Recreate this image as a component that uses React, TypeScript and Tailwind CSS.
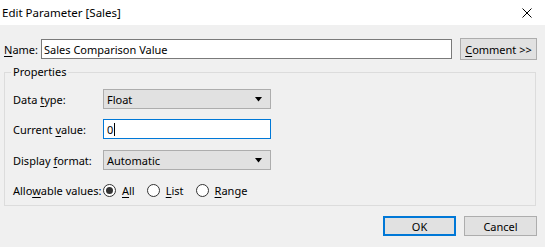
function Key({ children }: { children: string }) {
  return <span className="underline underline-offset-[2px] decoration-[1px]">{children}</span>
}

function Caret() {
  return (
    <svg width="7" height="5" viewBox="0 0 7 5" aria-hidden className="shrink-0">
      <path d="M0 0h7L3.5 4.5z" fill="#000" />
    </svg>
  )
}

function Select({ value }: { value: string }) {
  return (
    <div className="flex h-[20px] w-[168px] items-center justify-between border border-[#adadad] bg-[#e1e1e1] pl-[3px] pr-[8px]">
      <span>{value}</span>
      <Caret />
    </div>
  )
}

function Radio({ checked, label, k }: { checked?: boolean; label: string; k: string }) {
  return (
    <div className="flex items-center gap-[6px]">
      <span className="flex h-[13px] w-[13px] items-center justify-center rounded-full border border-[#333] bg-white">
        {checked && <span className="h-[7px] w-[7px] rounded-full bg-[#333]" />}
      </span>
      <span>
        <Key>{k}</Key>
        {label.slice(k.length)}
      </span>
    </div>
  )
}

function Row({ label, children }: { label: React.ReactNode; children: React.ReactNode }) {
  return (
    <div className="flex items-center">
      <div className="w-[90px] shrink-0 whitespace-nowrap">{label}</div>
      {children}
    </div>
  )
}

export default function App() {
  return (
    <div className="flex h-[247px] w-[545px] flex-col whitespace-nowrap bg-[#f0f0f0] font-['Segoe_UI','Noto_Sans',sans-serif] text-[11px] leading-none text-black">
      <div className="flex h-[25px] shrink-0 items-center justify-between bg-white pl-[2px] pr-[13px] text-[11.5px]">
        <span>Edit Parameter [Sales]</span>
        <svg width="10" height="10" viewBox="0 0 10 10" aria-label="Close">
          <path d="M0.5 0.5l9 9M9.5 0.5l-9 9" stroke="#000" strokeWidth="1" />
        </svg>
      </div>

      <div className="mt-[13px] flex items-center pl-[4px] pr-[8px]">
        <span className="w-[37px] shrink-0">
          <Key>N</Key>ame:
        </span>
        <div className="flex h-[20px] w-[411px] items-center border border-[#7a7a7a] bg-white pl-[2px]">
          Sales Comparison Value
        </div>
        <button
          type="button"
          className="ml-[8px] flex h-[22px] w-[77px] items-center justify-center border border-[#adadad] bg-[#e1e1e1]"
        >
          <Key>C</Key>omment &gt;&gt;
        </button>
      </div>

      <div className="relative mx-[4px] mt-[12px] h-[134px] w-[532px] border border-[#dcdcdc] pl-[8px] pt-[16px]">
        <span className="absolute -top-[7px] left-[6px] bg-[#f0f0f0] px-[2px]">Properties</span>
        <div className="flex flex-col">
          <Row
            label={
              <>
                Data <Key>t</Key>ype:
              </>
            }
          >
            <Select value="Float" />
          </Row>
          <div className="mt-[10px]">
            <Row
              label={
                <>
                  Current <Key>v</Key>alue:
                </>
              }
            >
              <div className="flex h-[20px] w-[168px] items-center border border-[#0078d7] bg-white pl-[3px]">
                0<span className="ml-[1px] h-[13px] w-px bg-black" />
              </div>
            </Row>
          </div>
          <div className="mt-[11px]">
            <Row
              label={
                <>
                  Display <Key>f</Key>ormat:
                </>
              }
            >
              <Select value="Automatic" />
            </Row>
          </div>
          <div className="mt-[11px] flex h-[18px] items-center">
            <span className="w-[90px] shrink-0">
              Allo<Key>w</Key>able values:
            </span>
            <div className="flex items-center gap-[12px]">
              <Radio checked label="All" k="A" />
              <Radio label="List" k="L" />
              <Radio label="Range" k="R" />
            </div>
          </div>
        </div>
      </div>

      <div className="mt-[10px] flex justify-end gap-[8px] pr-[8px]">
        <button
          type="button"
          className="flex h-[20px] w-[73px] items-center justify-center border-2 border-[#0078d7] bg-[#e1e1e1]"
        >
          OK
        </button>
        <button
          type="button"
          className="flex h-[20px] w-[73px] items-center justify-center border border-[#adadad] bg-[#e1e1e1]"
        >
          Cancel
        </button>
      </div>
    </div>
  )
}
